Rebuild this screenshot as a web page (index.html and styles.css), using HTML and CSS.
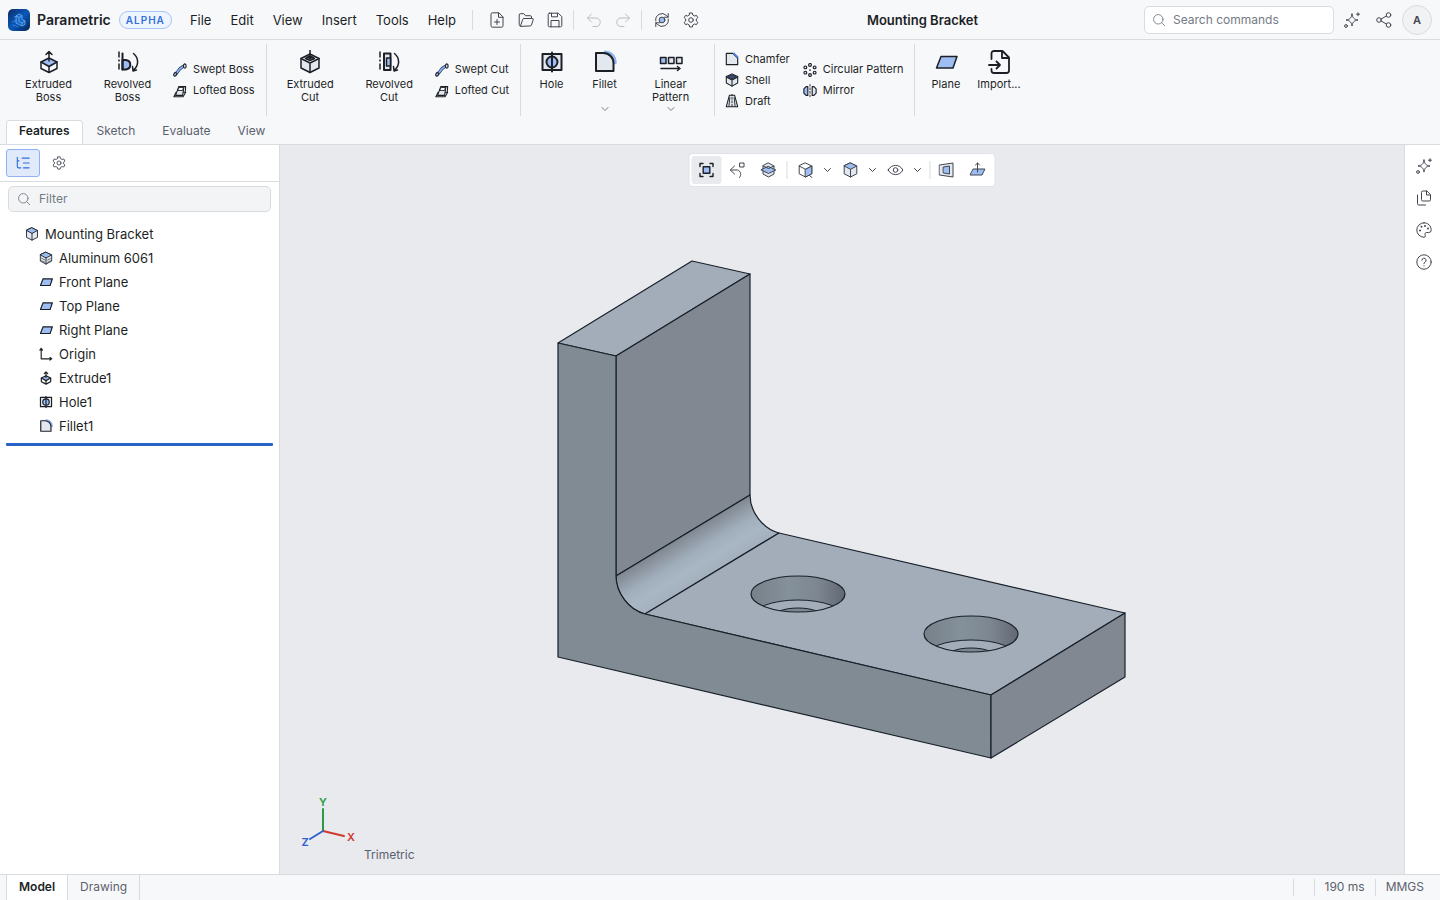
FILE: index.html
```html
<!DOCTYPE html>
<html lang="en">
<head>
<meta charset="utf-8">
<title>Mounting Bracket - Parametric</title>
<link rel="stylesheet" href="styles.css">
</head>
<body>
<svg class="sprite" aria-hidden="true">
  <defs>
    <symbol id="i-extrude" viewBox="0 0 24 24"><path class="s b" d="M12 8l8 4-8 4.500-8-4.500z"/><path class="s" d="M4 12v6.500l8 4 8-4V12M12 16.500v6M12 11V1.500M9 4.500l3-3 3 3"/></symbol>
    <symbol id="i-revolve" viewBox="0 0 24 24"><path class="s" stroke-dasharray="5 3 1 3" d="M3 2v19"/><path class="s b" stroke-width="2" d="M6.500 10h3.500a5 4.800 0 0 1 0 9.500H6.500z"/><path class="s" stroke-width="2" d="M6.500 3.500V19.500"/><path class="s" d="M17.500 3.500c5.500 4.500 5.500 12 0 16.500M16.500 16.500l.5 4.500 3.500-1"/></symbol>
    <symbol id="i-excut" viewBox="0 0 24 24"><path class="s g" d="M12 4l9 4.500v9.500l-9 4.500-9-4.500V8.500z"/><path class="s w" d="M3 8.500l9 4.500 9-4.500M12 13v9.500"/><path class="s b" d="M12 6l4.500 2.500-4.500 2-4.500-2z"/><path class="s" d="M12 0v9M10 7l2 2 2-2"/></symbol>
    <symbol id="i-revcut" viewBox="0 0 24 24"><path class="s" stroke-dasharray="5 3 1 3" d="M3 2v19"/><path class="s g" stroke-width="2" d="M7 3.500h6.500v16.500H7z"/><path class="s b" d="M9.500 8h4v8h-4z"/><path class="s" d="M17.500 3.500c5.500 4.500 5.500 12 0 16.500M16.500 16.500l.5 4.500 3.500-1"/></symbol>
    <symbol id="i-swept" viewBox="0 0 16 16"><path fill="none" stroke="#2b3f66" stroke-width="3.600" d="M3 12C6 11 6 8 8 6.500S11 4 13 3.500"/><path fill="none" stroke="#8fb4f0" stroke-width="1.800" d="M3 12C6 11 6 8 8 6.500S11 4 13 3.500"/><ellipse class="s b" stroke-width="1.300" cx="2.500" cy="13" rx="1.600" ry="2.100" transform="rotate(30 2.500 13)"/><ellipse class="s g" stroke-width="1.300" cx="13.500" cy="3.500" rx="1.500" ry="2.500"/></symbol>
    <symbol id="i-loft" viewBox="0 0 16 16"><path class="s g" stroke-width="1.200" d="M1 14.500L3.500 9.500h11L11.500 14.500z"/><path class="s g" stroke-width="1.200" d="M3 13L6.500 3h6l-1.500 10z"/><path class="s w" d="M5.500 7L7 4h5l-1 3z"/><path class="s" stroke-width="1.200" d="M12.500 3h2l-.5 6.500"/></symbol>
    <symbol id="i-hole" viewBox="0 0 24 24"><g stroke-width="2"><path class="s g" d="M2.500 4h19v16h-19z"/><circle class="s b" cx="12" cy="12" r="5.500"/><path class="s" d="M12 2.500v19"/></g></symbol>
    <symbol id="i-fillet" viewBox="0 0 24 24"><path fill="none" stroke="#8fb4f0" stroke-width="5" d="M11 3.300C17 3 21.500 7 21 14"/><path class="halo" d="M12 2.500C18 3 21.500 7 21.500 13"/><path class="s g" stroke-width="2" d="M3 3h7.500A10 10 0 0 1 20.500 13V21H3z"/></symbol>
    <symbol id="i-linear" viewBox="0 0 24 24"><path class="s b" d="M1.500 7.500H7v6H1.500z"/><path class="s g" d="M9.500 7.500H15v6H9.500zM17.500 7.500H23v6h-5.500z"/><path class="s" d="M2 18.500h19M18.500 16.500l2.500 2-2.500 2"/></symbol>
    <symbol id="i-chamfer" viewBox="0 0 16 16"><path class="s g" stroke-width="1.300" d="M1.500 1.500H9l5.500 5.500v7.500h-13z"/><path fill="none" stroke="#4d82dd" stroke-width="2" d="M9.500 1L15 6.500"/></symbol>
    <symbol id="i-shell" viewBox="0 0 16 16"><path class="s g" stroke-width="1.200" d="M8 1l6.500 3v7.500L8 15l-6.500-3.500V4z"/><path fill="#36507f" stroke="currentColor" d="M8 2L13 4.300 8 6.800 3 4.300z"/><path class="s" stroke-width="1.200" d="M1.500 4.500L8 8l6.500-3.500M8 8v7"/></symbol>
    <symbol id="i-draft" viewBox="0 0 16 16"><path class="s g" stroke-width="1.200" d="M5 1.500h6L14.500 14.500h-13z"/><path class="s" d="M5.500 4L4.500 14M10.500 4l1 10"/><path class="s" stroke-dasharray="2 2" d="M8 0v16"/></symbol>
    <symbol id="i-circ" viewBox="0 0 16 16"><g class="s g" stroke-width="1.300"><circle cx="8" cy="2.200" r="1.600"/><circle cx="13.300" cy="5" r="1.600"/><circle cx="13.300" cy="11" r="1.600"/><circle cx="8" cy="13.800" r="1.600"/><circle cx="2.700" cy="11" r="1.600"/><circle cx="2.700" cy="5" r="1.600"/></g><circle cx="8" cy="8" r="1" fill="currentColor"/></symbol>
    <symbol id="i-mirror" viewBox="0 0 16 16"><path class="s b" stroke-width="1.300" d="M5.500 3v10H3.500L1 10.500v-5L3.500 3z"/><path class="s g" stroke-width="1.300" d="M10.500 3v10h2l2.500-2.500v-5L12.500 3z"/><path class="s" stroke-dasharray="2 2" d="M8 .5v15"/></symbol>
    <symbol id="i-plane" viewBox="0 0 24 24"><path class="s b" d="M7 6.500h16L19 18H2.500z"/></symbol>
    <symbol id="i-import" viewBox="0 0 24 24"><path class="s" stroke-width="1.800" d="M4.500 9V3.500a2.500 2.500 0 0 1 2.500-2.500h8.500l6.500 6.500v13a2.500 2.500 0 0 1-2.500 2.500H7a2.500 2.500 0 0 1-2.500-2.500V19M15 1v7h7M2 15h11M9.500 11.500L13 15l-3.500 3.500"/></symbol>
    <symbol id="i-chev" viewBox="0 0 8 8"><path class="s" d="M1 2.500l3 3 3-3"/></symbol>
    <symbol id="i-new" viewBox="0 0 16 16"><path class="s" d="M9.500.8H3.500a1.500 1.500 0 0 0-1.500 1.500v11.400a1.500 1.500 0 0 0 1.500 1.500h9a1.500 1.500 0 0 0 1.500-1.500V5.300zM9.500.8v4.500H14M8 7.500v5M5.500 10h5"/></symbol>
    <symbol id="i-open" viewBox="0 0 16 16"><path class="s" d="M2.500 14a1.300 1.300 0 0 1-1.300-1.300V3A1.300 1.300 0 0 1 2.500 1.700h3.300l1.700 2h4.700a1.300 1.300 0 0 1 1.300 1.300v1.500M2.500 14L4.700 7.500a1.300 1.300 0 0 1 1.300-1h8.200a1 1 0 0 1 1 1.300L13.500 13a1.300 1.300 0 0 1-1.300 1z"/></symbol>
    <symbol id="i-save" viewBox="0 0 16 16"><path class="s" d="M2.500 1.200h8.800l3.500 3.500v8.800a1.300 1.300 0 0 1-1.300 1.300h-11a1.300 1.300 0 0 1-1.300-1.300v-11a1.300 1.300 0 0 1 1.300-1.300zM4.500 1.200v3.600h6V1.200M4 14.800V8.500h8v6.300"/></symbol>
    <symbol id="i-undo" viewBox="0 0 16 16"><path class="s" d="M5.500 2L1.500 6l4 4M1.500 6h8.500a4.200 4.200 0 0 1 0 8.500H7"/></symbol>
    <symbol id="i-redo" viewBox="0 0 16 16"><path class="s" d="M10.500 2l4 4-4 4M14.500 6H6a4.200 4.200 0 0 0 0 8.500h3"/></symbol>
    <symbol id="i-rebuild" viewBox="0 0 16 16"><circle class="s b" cx="8" cy="8" r="2.900"/><path class="s" d="M1.800 9A6.300 6.300 0 0 1 12.500 3.500L14.200 5.200M14.200 1.500v3.700h-3.700M14.200 7A6.300 6.300 0 0 1 3.500 12.500L1.800 10.800M1.800 14.500v-3.700h3.700"/></symbol>
    <symbol id="i-gear" viewBox="0 0 16 16"><path class="s" d="M6.700 1h2.600l.5 2 1.700 1 2-.6 1.300 2.300L13.300 7v2l1.500 1.300-1.300 2.300-2-.6-1.700 1-.5 2H6.700l-.5-2-1.700-1-2 .6-1.300-2.300L2.700 9V7L1.200 5.700l1.300-2.300 2 .6 1.700-1z"/><circle class="s" cx="8" cy="8" r="2.300"/></symbol>
    <symbol id="i-search" viewBox="0 0 16 16"><circle class="s" cx="7.200" cy="7.200" r="5.400"/><path class="s" d="M11.200 11.200l3.300 3.300"/></symbol>
    <symbol id="i-spark" viewBox="0 0 16 16"><path class="s" d="M8 2c.6 4 2 5.400 6 6-4 .6-5.400 2-6 6-.6-4-2-5.400-6-6 4-.6 5.400-2 6-6z"/><circle class="s" cx="2" cy="14" r="1.400"/><path class="s" d="M14 .7v3M12.500 2.200h3"/></symbol>
    <symbol id="i-share" viewBox="0 0 16 16"><circle class="s" cx="12.500" cy="3" r="2.300"/><circle class="s" cx="3" cy="8" r="2.300"/><circle class="s" cx="12.500" cy="13" r="2.300"/><path class="s" d="M5.100 7l5.300-3M5.100 9l5.300 3"/></symbol>
    <symbol id="i-tree" viewBox="0 0 16 16"><path class="s" stroke-width="1.300" d="M1.500 1.500v10.500a1.500 1.500 0 0 0 1.500 1.500h2.500M1.500 5.500h2M7 2.500h8M8.500 8H15M8.500 13.500H15"/></symbol>
    <symbol id="i-part" viewBox="0 0 16 16"><path class="s g" d="M8 1l6.300 3v7.800L8 15l-6.300-3.200V4z"/><path class="s b" d="M8 1l6.300 3L8 7.300 1.700 4z"/><path class="s" d="M8 7.300V15"/></symbol>
    <symbol id="i-mat" viewBox="0 0 16 16"><path class="s g" d="M8 1.500l6.500 3v7L8 15l-6.500-3.500v-7z"/><path class="s b" d="M8 1.500l6.500 3L8 8 1.500 4.500z"/><path class="s" d="M8 8v7"/><path fill="none" stroke="#5d6572" d="M2.500 8l4.500 2.500M2.500 11L7 13M9.500 10.500l4-2M9.500 13l4-2"/></symbol>
    <symbol id="i-origin" viewBox="0 0 16 16"><path class="s" stroke-width="1.300" d="M2.500 1.500v12h12M1 3.500l1.500-2L4 3.500M12.500 12l2 1.500-2 1.500"/></symbol>
    <symbol id="i-fit" viewBox="0 0 16 16"><path class="s" stroke-width="1.400" stroke-linecap="butt" d="M1.500 4.500V1.500H4.500M11.500 1.500h3V4.500M14.500 11.500v3H11.500M4.500 14.500H1.500V11.500"/><path class="s b" stroke-width="1.400" d="M4.700 4.700h6.600v6.600H4.700z"/></symbol>
    <symbol id="i-prev" viewBox="0 0 16 16"><path class="s" d="M5 4L.8 8 5 12M1 8h7a4.500 4.500 0 0 1 2 7.500M10.500 1h4v4h-4z"/></symbol>
    <symbol id="i-section" viewBox="0 0 16 16"><path class="s g" d="M8 1l5.500 3v8L8 15l-5.500-3V4z"/><path class="s b" d="M8 4.500L15.300 8 8 11.500.7 8z"/><path class="s" d="M2.500 4L8 6.500 13.500 4"/></symbol>
    <symbol id="i-orient" viewBox="0 0 16 16"><path class="s w" d="M8 1l6.300 3v7.800L8 15l-6.300-3.200V4zM1.700 4L8 7.300 14.300 4"/><path class="s b" d="M8 7.300L14.300 4v7.800L8 15z"/><path class="s" d="M12 13.500l2.500 2"/></symbol>
    <symbol id="i-eye" viewBox="0 0 16 16"><path class="s" d="M.6 8C4 1.800 12 1.800 15.400 8 12 14.200 4 14.200.6 8z"/><circle class="s" cx="8" cy="8" r="2.300"/></symbol>
    <symbol id="i-persp" viewBox="0 0 16 16"><path class="s g" d="M1 3l13.500-2v14L1 13z"/><path class="s b" d="M5 5l6-1v8l-6-1z"/></symbol>
    <symbol id="i-normal" viewBox="0 0 16 16"><path class="s b" d="M4 7h11.500l-3 6H.8z"/><path class="s" d="M8 10V1M6 3l2-2 2 2"/></symbol>
    <symbol id="i-copy" viewBox="0 0 16 16"><path class="s" d="M10.500 1H6.800A1.300 1.300 0 0 0 5.500 2.300v7.400A1.300 1.300 0 0 0 6.800 11h6.400a1.300 1.300 0 0 0 1.300-1.300V5zM10.500 1v4h4M1.500 5v8.700A1.300 1.300 0 0 0 2.800 15h6.700"/></symbol>
    <symbol id="i-palette" viewBox="0 0 16 16"><path class="s" d="M8 .8a7.200 7.200 0 1 0 0 14.400c2 0 1.300-1.700 1-2.500-.4-1.300.4-2.200 1.700-2.200h2a2.500 2.500 0 0 0 2.500-2.700C15 3.800 12 .8 8 .8z"/><g fill="currentColor"><circle cx="4" cy="8.500" r="1"/><circle cx="5.500" cy="4.800" r="1"/><circle cx="9" cy="4" r="1"/><circle cx="12" cy="6.500" r="1"/></g></symbol>
    <symbol id="i-help" viewBox="0 0 16 16"><circle class="s" cx="8" cy="8" r="7.200"/><path class="s" d="M5.900 6.200a2.100 2.100 0 1 1 3.100 1.900c-.8.400-1 .8-1 1.400M8 11.700v.3"/></symbol>
  </defs>
</svg>

<div class="app">
  <header class="topbar">
    <div class="topbar-left">
      <svg class="logo" viewBox="0 0 22 22" aria-hidden="true">
        <defs><linearGradient id="lg" x1="0" y1="0" x2="1" y2="1"><stop offset="0" stop-color="#0c2c66"/><stop offset=".5" stop-color="#0b58b8"/><stop offset="1" stop-color="#052456"/></linearGradient></defs>
        <rect width="22" height="22" rx="5" fill="url(#lg)"/>
        <path d="M4 13l5-2M4.500 16l6 2M6 8l3-1" stroke="#2f7fe0" fill="none"/>
        <path d="M8 7l3-2 3 1.500v4l3 1.500v3.500L14 17l-6-3zM8 7l3 1.500v4l3 1.500v3M11 8.500l3-2M14 14l3-2" stroke="#6db4fb" stroke-width=".8" fill="#1d74d8" fill-opacity=".5"/>
      </svg>
      <span class="brand">Parametric</span>
      <span class="badge">ALPHA</span>
      <nav class="menu" aria-label="Main menu">
        <button>File</button><button>Edit</button><button>View</button><button>Insert</button><button>Tools</button><button>Help</button>
      </nav>
      <div class="tools">
        <button class="tool" aria-label="New"><svg><use href="#i-new"/></svg></button>
        <button class="tool" aria-label="Open"><svg><use href="#i-open"/></svg></button>
        <button class="tool" aria-label="Save"><svg><use href="#i-save"/></svg></button>
      </div>
      <div class="tools">
        <button class="tool" aria-label="Undo" disabled><svg><use href="#i-undo"/></svg></button>
        <button class="tool" aria-label="Redo" disabled><svg><use href="#i-redo"/></svg></button>
      </div>
      <div class="tools">
        <button class="tool" aria-label="Rebuild"><svg><use href="#i-rebuild"/></svg></button>
        <button class="tool" aria-label="Settings"><svg><use href="#i-gear"/></svg></button>
      </div>
    </div>
    <h1 class="doc-title">Mounting Bracket</h1>
    <div class="topbar-right">
      <label class="field command-search"><svg><use href="#i-search"/></svg><input type="text" placeholder="Search commands" aria-label="Search commands"></label>
      <button class="side-tool" aria-label="Assistant"><svg><use href="#i-spark"/></svg></button>
      <button class="side-tool" aria-label="Share"><svg><use href="#i-share"/></svg></button>
      <button class="avatar" aria-label="Account">A</button>
    </div>
  </header>

  <section class="ribbon" aria-label="Features">
    <div class="group">
      <button class="big wide"><svg><use href="#i-extrude"/></svg><span>Extruded<br>Boss</span></button>
      <button class="big wide"><svg><use href="#i-revolve"/></svg><span>Revolved<br>Boss</span></button>
      <div class="stack">
        <button class="small"><svg><use href="#i-swept"/></svg>Swept Boss</button>
        <button class="small"><svg><use href="#i-loft"/></svg>Lofted Boss</button>
      </div>
    </div>
    <div class="group">
      <button class="big wide"><svg><use href="#i-excut"/></svg><span>Extruded<br>Cut</span></button>
      <button class="big wide"><svg><use href="#i-revcut"/></svg><span>Revolved<br>Cut</span></button>
      <div class="stack">
        <button class="small"><svg><use href="#i-swept"/></svg>Swept Cut</button>
        <button class="small"><svg><use href="#i-loft"/></svg>Lofted Cut</button>
      </div>
    </div>
    <div class="group">
      <button class="big"><svg><use href="#i-hole"/></svg><span>Hole</span></button>
      <button class="big"><svg><use href="#i-fillet"/></svg><span>Fillet</span><svg class="more"><use href="#i-chev"/></svg></button>
      <button class="big wide"><svg><use href="#i-linear"/></svg><span>Linear<br>Pattern</span><svg class="more"><use href="#i-chev"/></svg></button>
    </div>
    <div class="group">
      <div class="stack">
        <button class="small"><svg><use href="#i-chamfer"/></svg>Chamfer</button>
        <button class="small"><svg><use href="#i-shell"/></svg>Shell</button>
        <button class="small"><svg><use href="#i-draft"/></svg>Draft</button>
      </div>
      <div class="stack">
        <button class="small"><svg><use href="#i-circ"/></svg>Circular Pattern</button>
        <button class="small"><svg><use href="#i-mirror"/></svg>Mirror</button>
      </div>
    </div>
    <div class="group">
      <button class="big"><svg><use href="#i-plane"/></svg><span>Plane</span></button>
      <button class="big"><svg><use href="#i-import"/></svg><span>Import...</span></button>
    </div>
  </section>

  <nav class="ribbon-tabs" aria-label="Ribbon">
    <button class="active">Features</button><button>Sketch</button><button>Evaluate</button><button>View</button>
  </nav>

  <main class="workspace">
    <aside class="sidebar">
      <div class="panel-tabs">
        <button class="active" aria-label="Feature tree"><svg><use href="#i-tree"/></svg></button>
        <button aria-label="Properties"><svg><use href="#i-gear"/></svg></button>
      </div>
      <label class="field filter"><svg><use href="#i-search"/></svg><input type="text" placeholder="Filter" aria-label="Filter"></label>
      <ul class="tree">
        <li class="root"><svg><use href="#i-part"/></svg>Mounting Bracket</li>
        <li><svg><use href="#i-mat"/></svg>Aluminum 6061</li>
        <li><svg class="dense"><use href="#i-plane"/></svg>Front Plane</li>
        <li><svg class="dense"><use href="#i-plane"/></svg>Top Plane</li>
        <li><svg class="dense"><use href="#i-plane"/></svg>Right Plane</li>
        <li><svg><use href="#i-origin"/></svg>Origin</li>
        <li><svg class="dense"><use href="#i-extrude"/></svg>Extrude1</li>
        <li><svg><use href="#i-hole"/></svg>Hole1</li>
        <li><svg><use href="#i-fillet"/></svg>Fillet1</li>
      </ul>
      <div class="rollback"></div>
    </aside>

    <section class="viewport" aria-label="Model view">
      <svg class="model" viewBox="280 145 1124 729" role="img" aria-label="Mounting bracket model">
        <defs>
          <linearGradient id="fil" gradientUnits="userSpaceOnUse" x1="616" y1="576" x2="641" y2="617"><stop offset="0" stop-color="#7f8690"/><stop offset=".2" stop-color="#8f99a4"/><stop offset=".45" stop-color="#a1afbd"/><stop offset=".7" stop-color="#a9b7c5"/><stop offset="1" stop-color="#a3afbc"/></linearGradient>
          <linearGradient id="bore"><stop offset="0" stop-color="#77818a"/><stop offset=".4" stop-color="#84909a"/><stop offset=".7" stop-color="#7d8791"/><stop offset="1" stop-color="#626874"/></linearGradient>
          <clipPath id="rim"><ellipse rx="47" ry="18"/></clipPath>
          <g id="cbore">
            <ellipse rx="47" ry="18" fill="url(#bore)"/>
            <g clip-path="url(#rim)"><ellipse cy="24" rx="47" ry="18" fill="#a3adb9" stroke="#18202a"/><ellipse cy="24" rx="26" ry="10" fill="#7d8791" stroke="#18202a"/></g>
            <ellipse rx="47" ry="18" fill="none" stroke="#18202a" stroke-width="1.200"/>
          </g>
        </defs>
        <g stroke="#18202a" stroke-width="1.200" stroke-linejoin="round">
          <path fill="#a3adb9" d="M558 343L692 261 750 274 616 356z"/>
          <path fill="#828892" d="M616 356L750 274V495L616 576z"/>
          <path fill="url(#fil)" d="M616 576L750 495C750 512 763 529 779 533L645 614C629 610 616 593 616 576z"/>
          <path fill="#a3adb9" d="M645 614L779 533 1125 613 991 695z"/>
          <path fill="#808b93" d="M558 343L616 356V576C616 593 629 610 645 614L991 695V758L558 657z"/>
          <path fill="#828892" d="M991 695L1125 613V677L991 758z"/>
        </g>
        <use href="#cbore" transform="translate(798 594)"/>
        <use href="#cbore" transform="translate(971 634)"/>
      </svg>

      <div class="view-tools" role="toolbar" aria-label="View">
        <button class="active" aria-label="Zoom to fit"><svg><use href="#i-fit"/></svg></button>
        <button aria-label="Previous view"><svg><use href="#i-prev"/></svg></button>
        <button aria-label="Section view"><svg><use href="#i-section"/></svg></button>
        <i></i>
        <button aria-label="View orientation"><svg><use href="#i-orient"/></svg></button>
        <button class="drop" aria-label="More orientations"><svg><use href="#i-chev"/></svg></button>
        <button aria-label="Display style"><svg><use href="#i-part"/></svg></button>
        <button class="drop" aria-label="More display styles"><svg><use href="#i-chev"/></svg></button>
        <button aria-label="Visibility"><svg><use href="#i-eye"/></svg></button>
        <button class="drop" aria-label="More visibility options"><svg><use href="#i-chev"/></svg></button>
        <i></i>
        <button aria-label="Perspective"><svg><use href="#i-persp"/></svg></button>
        <button aria-label="Normal to"><svg><use href="#i-normal"/></svg></button>
      </div>

      <div class="orientation">
        <svg class="triad" viewBox="0 0 64 60" aria-label="Axes">
          <g stroke-width="2" stroke-linecap="round"><path stroke="#2b9a44" d="M27 40V18"/><path stroke="#d0392f" d="M27 40l21 5"/><path stroke="#2d60d2" d="M27 40l-13 8"/></g>
          <g text-anchor="middle"><text x="27" y="15" fill="#2b9a44">Y</text><text x="55" y="50" fill="#d0392f">X</text><text x="9" y="55" fill="#2d60d2">Z</text></g>
        </svg>
        <span>Trimetric</span>
      </div>
    </section>

    <aside class="rail">
      <button class="side-tool" aria-label="Assistant panel"><svg><use href="#i-spark"/></svg></button>
      <button class="side-tool" aria-label="Documents"><svg><use href="#i-copy"/></svg></button>
      <button class="side-tool" aria-label="Appearance"><svg><use href="#i-palette"/></svg></button>
      <button class="side-tool" aria-label="Help"><svg><use href="#i-help"/></svg></button>
    </aside>
  </main>

  <footer class="status">
    <nav class="sheet-tabs" aria-label="Sheets"><button class="active">Model</button><button>Drawing</button></nav>
    <span class="cell"></span><span class="cell">190 ms</span><button class="cell">MMGS</button>
  </footer>
</div>
</body>
</html>
```

FILE: styles.css
```css
:root {
  --ink: #1c1f26;
  --muted: #5b616c;
  --line: #d8dbe0;
  --chrome: #f7f8fa;
  --tint: #9dbdf3;
  --pale: #e3e8ee;
}
* { box-sizing: border-box; }
body { margin: 0; font: 13px/16px Inter, "Liberation Sans", sans-serif; color: var(--ink); }
button { font: inherit; color: inherit; background: none; border: 0; padding: 0; }
svg { display: block; flex: none; }
.sprite { position: absolute; width: 0; height: 0; }
.s { fill: none; stroke: currentColor; stroke-linecap: round; stroke-linejoin: round; }
.b { fill: var(--tint); }
.g { fill: var(--pale); }
.w { fill: #fff; }
.halo { fill: none; stroke: #8fb4f0; stroke-width: 4px; }

.app { display: flex; flex-direction: column; min-height: 100vh; background: var(--chrome); }

.topbar { display: flex; align-items: center; height: 40px; padding: 0 8px; border-bottom: 1px solid var(--line); }
.topbar-left, .topbar-right { display: flex; align-items: center; }
.logo { width: 22px; height: 22px; }
.brand { margin-left: 7px; font-size: 14px; font-weight: 600; }
.badge { margin-left: 8px; padding: 0 6px; border: 1px solid #a9c4f5; border-radius: 9px; background: #eff5ff; color: #2f6fdd; font-size: 10px; font-weight: 600; letter-spacing: 1px; }
.menu { display: flex; gap: 1px; margin-left: 9px; }
.menu button { padding: 4px 9px; }
.tools { display: flex; align-items: center; gap: 1px; }
.tools::before { content: ""; width: 1px; height: 20px; margin: 0 5px 0 4px; background: var(--line); }
.menu + .tools::before { margin-left: 7px; margin-right: 9px; }
.tool { display: grid; place-items: center; width: 28px; height: 28px; color: #40454f; }
.tool svg { width: 16px; height: 16px; }
.tool:disabled { color: #b9bdc4; }
.doc-title { flex: 1; margin: 0; padding-right: 4px; text-align: center; font-size: 13px; font-weight: 600; line-height: 16px; }
.topbar-right { gap: 2px; }
.field { display: flex; align-items: center; gap: 7px; padding: 0 8px; border: 1px solid var(--line); border-radius: 5px; color: #747a84; font-size: 12px; }
.field svg { width: 14px; height: 14px; }
.field input { flex: 1; min-width: 0; padding: 0; border: 0; outline: 0; background: none; font: inherit; color: var(--ink); }
.field input::placeholder { color: #747a84; opacity: 1; }
.command-search { width: 190px; height: 28px; margin-right: 1px; padding: 0 7px; background: #fff; }
.side-tool { display: grid; place-items: center; width: 30px; height: 30px; color: #40454f; }
.side-tool svg { width: 16px; height: 16px; }
.avatar { width: 30px; height: 30px; margin-left: 1px; border: 1px solid var(--line); border-radius: 50%; background: #f1f2f4; color: #40454f; font-size: 11px; font-weight: 600; }

.ribbon { display: flex; height: 80px; padding: 4px 5px; font-size: 11px; line-height: 13px; }
.group { display: flex; align-items: center; padding: 0 4px; border-right: 1px solid var(--line); }
.group:last-child { border-right: 0; }
.big { display: flex; flex-direction: column; align-items: center; align-self: stretch; width: 53px; padding-top: 6px; }
.big.wide { width: 79px; }
.big svg { width: 24px; height: 24px; stroke-width: 1.5px; }
.big span { margin-top: 4px; }
.big .more { width: 8px; height: 8px; margin-top: auto; margin-bottom: 3px; color: #777c85; stroke-width: 1px; }
.stack { display: flex; flex-direction: column; }
.small { display: flex; align-items: center; gap: 6px; height: 21px; padding: 0 7px 0 6px; white-space: nowrap; }
.small svg { width: 14px; height: 14px; }

.ribbon-tabs { display: flex; gap: 1px; height: 25px; padding: 0 6px; border-bottom: 1px solid var(--line); font-size: 12px; color: var(--muted); }
.ribbon-tabs button { padding: 0 12px 4px; border: 1px solid transparent; border-bottom: 0; border-radius: 4px 4px 0 0; }
.ribbon-tabs .active { border-color: var(--line); background: #fff; color: var(--ink); font-weight: 600; }

.workspace { flex: 1; display: flex; min-height: 0; }
.sidebar { width: 280px; border-right: 1px solid var(--line); background: #fff; }
.panel-tabs { display: flex; gap: 2px; padding: 4px 6px; border-bottom: 1px solid var(--line); }
.panel-tabs button { display: grid; place-items: center; width: 34px; height: 28px; border: 1px solid transparent; border-radius: 3px; color: #40454f; }
.panel-tabs .active { border-color: #8fb3f0; background: #e0eafb; color: #2f6fdd; }
.panel-tabs svg { width: 14px; height: 14px; }
.filter { height: 26px; margin: 4px 8px 10px; background: #f3f4f6; gap: 8px; }
.tree { margin: 0; padding: 0; list-style: none; }
.tree li { display: flex; align-items: center; gap: 6px; height: 24px; padding-left: 39px; }
.tree .root { padding-left: 25px; }
.tree svg { width: 14px; height: 14px; }
.tree .dense { stroke-width: 2px; }
.rollback { height: 3px; margin: 5px 6px 0; border-radius: 1px; background: #2563c4; }

.viewport { position: relative; flex: 1; min-width: 0; background: #e8eaee; }
.model { position: absolute; width: 100%; height: 100%; }
.view-tools { position: absolute; top: 8px; left: 50%; transform: translateX(-50%); display: flex; align-items: center; gap: 1px; padding: 2px; border: 1px solid #dfe2e7; border-radius: 4px; background: #fff; }
.view-tools button { display: grid; place-items: center; width: 30px; height: 28px; border-radius: 3px; color: #40454f; }
.view-tools .active { background: #e8eaee; color: var(--ink); }
.view-tools svg { width: 16px; height: 16px; }
.view-tools .drop { width: 11px; margin-right: 2px; }
.view-tools .drop svg { width: 8px; height: 8px; }
.view-tools i { width: 1px; height: 18px; margin: 0 2px; background: var(--line); }
.view-tools .drop + i { margin: 0 0 0 4px; }
.orientation { position: absolute; left: 16px; bottom: 11px; display: flex; align-items: flex-end; gap: 4px; font-size: 12px; color: var(--muted); }
.triad { width: 64px; height: 60px; margin-bottom: 12px; font-size: 11px; font-weight: 600; }

.rail { display: flex; flex-direction: column; gap: 2px; width: 36px; padding: 6px 0 0 4px; border-left: 1px solid var(--line); background: #fff; }

.status { display: flex; align-items: stretch; height: 26px; padding: 0 6px; border-top: 1px solid var(--line); font-size: 12px; color: var(--muted); }
.sheet-tabs { display: flex; flex: 1; }
.sheet-tabs button { padding: 0 12px 2px; border-right: 1px solid var(--line); }
.sheet-tabs .active { border-left: 1px solid var(--line); background: #fff; color: var(--ink); font-weight: 600; }
.cell { margin: 4px 0; padding: 0 10px; border-left: 1px solid var(--line); }
button.cell { padding-bottom: 2px; }
```
